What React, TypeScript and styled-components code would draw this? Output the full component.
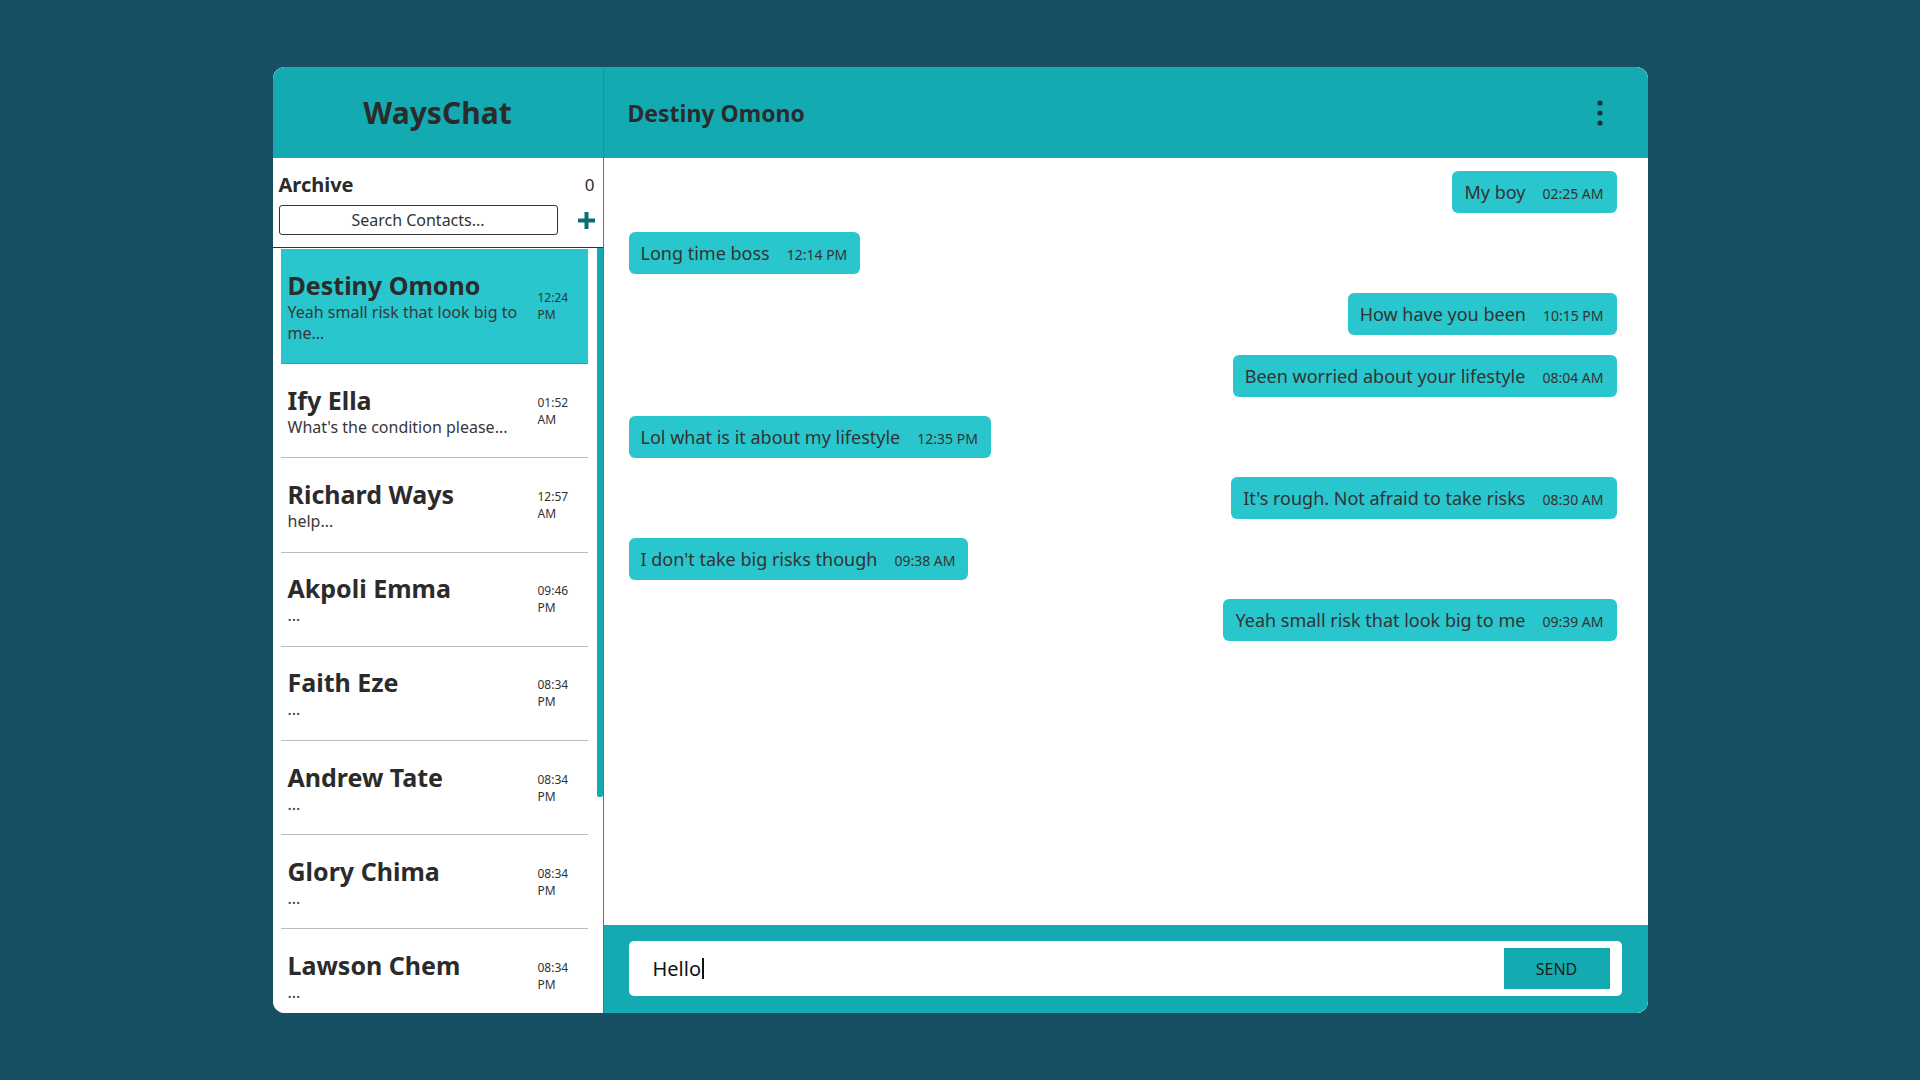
import styled, { createGlobalStyle } from 'styled-components';

const GlobalStyle = createGlobalStyle`
    * {
        box-sizing: border-box;
    }
    body {
        margin: 0;
        background-color: #174f63;
        font-family: 'Noto Sans', 'Open Sans', sans-serif;
        color: #2b2b2b;
    }
`;

const CONTACTS = [
    { name: 'Destiny Omono', last: 'Yeah small risk that look big to me...', time: '12:24 PM' },
    { name: 'Ify Ella', last: "What's the condition please...", time: '01:52 AM' },
    { name: 'Richard Ways', last: 'help...', time: '12:57 AM' },
    { name: 'Akpoli Emma', last: '...', time: '09:46 PM' },
    { name: 'Faith Eze', last: '...', time: '08:34 PM' },
    { name: 'Andrew Tate', last: '...', time: '08:34 PM' },
    { name: 'Glory Chima', last: '...', time: '08:34 PM' },
    { name: 'Lawson Chem', last: '...', time: '08:34 PM' },
    { name: 'Chidi Obi', last: '...', time: '08:34 PM' },
    { name: 'Grace Ade', last: '...', time: '08:34 PM' },
];

const MESSAGES = [
    { text: 'My boy', time: '02:25 AM', mine: true },
    { text: 'Long time boss', time: '12:14 PM', mine: false },
    { text: 'How have you been', time: '10:15 PM', mine: true },
    { text: 'Been worried about your lifestyle', time: '08:04 AM', mine: true },
    { text: 'Lol what is it about my lifestyle', time: '12:35 PM', mine: false },
    { text: "It's rough. Not afraid to take risks", time: '08:30 AM', mine: true },
    { text: "I don't take big risks though", time: '09:38 AM', mine: false },
    { text: 'Yeah small risk that look big to me', time: '09:39 AM', mine: true },
];

function PlusIcon() {
    return (
        <svg width='17' height='17' viewBox='0 0 17 17'>
            <rect x='6.5' y='0' width='4' height='17' fill='#0e6d72' />
            <rect x='0' y='6.5' width='17' height='4' fill='#0e6d72' />
        </svg>
    );
}

function KebabIcon() {
    return (
        <svg width='6' height='26' viewBox='0 0 6 26'>
            <circle cx='3' cy='3' r='2.6' fill='#15303d' />
            <circle cx='3' cy='13' r='2.6' fill='#15303d' />
            <circle cx='3' cy='23' r='2.6' fill='#15303d' />
        </svg>
    );
}

export default function App() {
    return (
        <>
            <GlobalStyle />
            <Page>
                <ChatWindow>
                    <Sidebar>
                        <Brand>WaysChat</Brand>
                        <SearchSection>
                            <ArchiveRow>
                                <ArchiveLabel>Archive</ArchiveLabel>
                                <ArchiveCount>0</ArchiveCount>
                            </ArchiveRow>
                            <SearchRow>
                                <SearchInput placeholder='Search Contacts...' />
                                <AddButton aria-label='Add contact'>
                                    <PlusIcon />
                                </AddButton>
                            </SearchRow>
                        </SearchSection>
                        <ListFrame>
                            <ContactList>
                                {CONTACTS.map((contact, index) => (
                                    <ContactItem key={index} $active={index === 0}>
                                        <ContactText>
                                            <ContactName>{contact.name}</ContactName>
                                            <ContactPreview>{contact.last}</ContactPreview>
                                        </ContactText>
                                        <ContactTime>{contact.time}</ContactTime>
                                    </ContactItem>
                                ))}
                            </ContactList>
                            <ScrollThumb />
                        </ListFrame>
                    </Sidebar>
                    <ChatPanel>
                        <ChatHeader>
                            <ChatTitle>Destiny Omono</ChatTitle>
                            <MenuButton aria-label='Menu'>
                                <KebabIcon />
                            </MenuButton>
                        </ChatHeader>
                        <MessageList>
                            {MESSAGES.map((message, index) => (
                                <Bubble key={index} $mine={message.mine}>
                                    {message.text}
                                    <BubbleTime>{message.time}</BubbleTime>
                                </Bubble>
                            ))}
                        </MessageList>
                        <Composer>
                            <ComposerBox>
                                <ComposerText>
                                    Hello
                                    <Caret />
                                </ComposerText>
                                <SendButton>Send</SendButton>
                            </ComposerBox>
                        </Composer>
                    </ChatPanel>
                </ChatWindow>
            </Page>
        </>
    );
}

const Page = styled.main`
    width: 100%;
    height: 100vh;
    display: flex;
    align-items: center;
    justify-content: center;
`;

const ChatWindow = styled.div`
    width: 1375px;
    height: 946px;
    display: grid;
    grid-template-columns: 331px 1fr;
    border-radius: 12px;
    overflow: hidden;
    background-color: white;
`;

const Sidebar = styled.aside`
    display: flex;
    flex-direction: column;
    min-height: 0;
    border-right: 1px solid #707070;
    background-color: white;
`;

const Brand = styled.header`
    height: 91px;
    flex: none;
    display: grid;
    place-items: center;
    background-color: #14aab2;
    font-size: 30px;
    font-weight: 700;
    color: #2b2b2b;
`;

const SearchSection = styled.div`
    flex: none;
    display: flex;
    flex-direction: column;
    gap: 7px;
    padding: 13px 8px 12px 6px;
    border-bottom: 1px solid #333;
`;

const ArchiveRow = styled.div`
    display: flex;
    align-items: center;
    justify-content: space-between;
`;

const ArchiveLabel = styled.span`
    font-size: 20px;
    font-weight: 700;
    color: #2b2b2b;
`;

const ArchiveCount = styled.span`
    font-size: 17px;
    color: #2b2b2b;
`;

const SearchRow = styled.div`
    display: flex;
    align-items: center;
    justify-content: space-between;
`;

const SearchInput = styled.input`
    width: 279px;
    height: 30px;
    border: 1px solid #333;
    border-radius: 3px;
    font-family: inherit;
    font-size: 16px;
    text-align: center;
    color: #2b2b2b;
    outline: none;

    &::placeholder {
        color: #333;
    }
`;

const AddButton = styled.button`
    display: grid;
    place-items: center;
    padding: 0;
    border: none;
    background: none;
    cursor: pointer;
`;

const ListFrame = styled.div`
    position: relative;
    flex: 1;
    min-height: 0;
    display: flex;
`;

const ContactList = styled.div`
    flex: 1;
    min-height: 0;
    overflow-y: auto;
    padding: 1px 15px 30px 8px;
    scrollbar-width: none;

    &::-webkit-scrollbar {
        display: none;
    }
`;

const ScrollThumb = styled.div`
    position: absolute;
    top: 0;
    right: 0;
    width: 6px;
    height: 549px;
    border-radius: 0 0 2px 2px;
    background-color: #14aab2;
`;

const ContactItem = styled.div<{ $active?: boolean }>`
    display: flex;
    align-items: center;
    gap: 5px;
    padding: 19.6px 10px 19.6px 7px;
    border-bottom: 1px solid ${(p) => (p.$active ? '#1fa7ad' : '#bdbdbd')};
    background-color: ${(p) => (p.$active ? '#29c6cd' : 'transparent')};
    cursor: pointer;
`;

const ContactText = styled.div`
    flex: 1;
    min-width: 0;
`;

const ContactName = styled.div`
    font-size: 25px;
    font-weight: 700;
    line-height: 33px;
    color: #2b2b2b;
`;

const ContactPreview = styled.div`
    font-size: 16px;
    line-height: 21px;
    color: #383838;
`;

const ContactTime = styled.div`
    width: 40px;
    flex: none;
    font-size: 12px;
    line-height: 17px;
    color: #333;
`;

const ChatPanel = styled.section`
    display: flex;
    flex-direction: column;
    min-width: 0;
    min-height: 0;
    background-color: white;
`;

const ChatHeader = styled.header`
    height: 91px;
    flex: none;
    display: flex;
    align-items: center;
    justify-content: space-between;
    padding: 0 45px 0 24px;
    background-color: #14aab2;
`;

const ChatTitle = styled.h2`
    margin: 0;
    font-size: 23px;
    font-weight: 700;
    color: #2b2b2b;
`;

const MenuButton = styled.button`
    display: grid;
    place-items: center;
    padding: 0;
    border: none;
    background: none;
    cursor: pointer;
`;

const MessageList = styled.div`
    flex: 1;
    min-height: 0;
    overflow-y: auto;
    display: flex;
    flex-direction: column;
    gap: 19.2px;
    padding: 13px 31px 13px 25px;
`;

const Bubble = styled.div<{ $mine?: boolean }>`
    align-self: ${(p) => (p.$mine ? 'flex-end' : 'flex-start')};
    height: 42px;
    padding: 0 13px 0 12px;
    border-radius: 6px;
    background-color: #29c6cd;
    font-size: 18px;
    line-height: 42px;
    white-space: nowrap;
    color: #333;
`;

const BubbleTime = styled.span`
    margin-left: 17px;
    font-size: 14px;
    color: #333;
`;

const Composer = styled.footer`
    height: 88px;
    flex: none;
    padding: 16px 26px 17px 25px;
    background-color: #14aab2;
`;

const ComposerBox = styled.div`
    height: 100%;
    display: flex;
    align-items: center;
    justify-content: space-between;
    padding: 0 12px 0 24px;
    border-radius: 5px;
    background-color: white;
`;

const ComposerText = styled.div`
    display: flex;
    align-items: center;
    font-size: 20px;
    color: #111;
`;

const Caret = styled.span`
    width: 2px;
    height: 21px;
    margin-left: 1px;
    background-color: #111;
`;

const SendButton = styled.button`
    width: 106px;
    height: 41px;
    border: none;
    background-color: #14aab2;
    font-family: inherit;
    font-size: 16px;
    text-transform: uppercase;
    color: #1a1a1a;
    cursor: pointer;
`;
